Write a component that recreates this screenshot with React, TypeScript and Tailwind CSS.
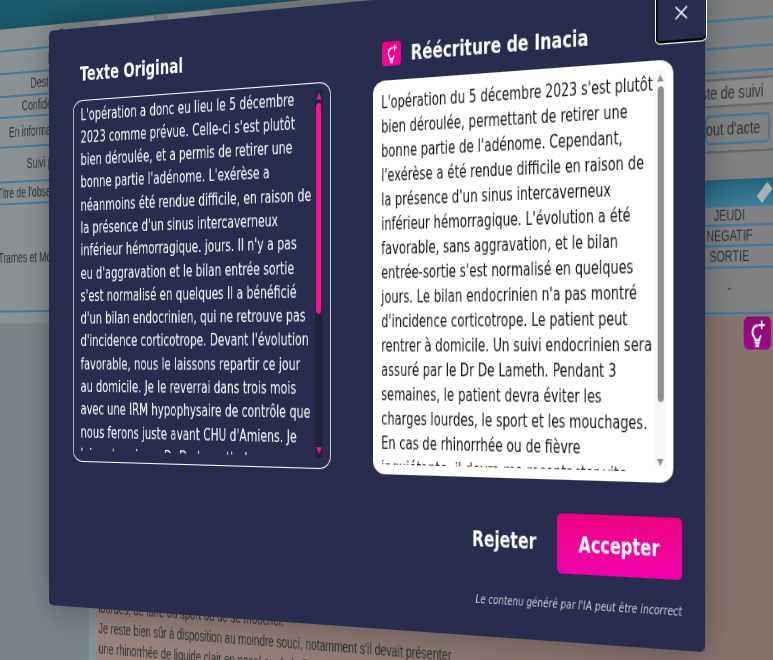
const originalLines = [
  "L'opération a donc eu lieu le 5 décembre",
  "2023 comme prévue. Celle-ci s'est plutôt",
  "bien déroulée, et a permis de retirer une",
  "bonne partie l'adénome. L'exérèse a",
  "néanmoins été rendue difficile, en raison de",
  "la présence d'un sinus intercaverneux",
  "inférieur hémorragique. jours. II n'y a pas",
  "eu d'aggravation et le bilan entrée sortie",
  "s'est normalisé en quelques Il a bénéficié",
  "d'un bilan endocrinien, qui ne retrouve pas",
  "d'incidence corticotrope. Devant l'évolution",
  "favorable, nous le laissons repartir ce jour",
  "au domicile. Je le reverrai dans trois mois",
  "avec une IRM hypophysaire de contrôle que",
  "nous ferons juste avant CHU d'Amiens. Je",
  "laisse le soin au Dr De Lameth de",
];

const rewrittenLines = [
  "L'opération du 5 décembre 2023 s'est plutôt",
  "bien déroulée, permettant de retirer une",
  "bonne partie de l'adénome. Cependant,",
  "l'exérèse a été rendue difficile en raison de",
  "la présence d'un sinus intercaverneux",
  "inférieur hémorragique. L'évolution a été",
  "favorable, sans aggravation, et le bilan",
  "entrée-sortie s'est normalisé en quelques",
  "jours. Le bilan endocrinien n'a pas montré",
  "d'incidence corticotrope. Le patient peut",
  "rentrer à domicile. Un suivi endocrinien sera",
  "assuré par le Dr De Lameth. Pendant 3",
  "semaines, le patient devra éviter les",
  "charges lourdes, le sport et les mouchages.",
  "En cas de rhinorrhée ou de fièvre",
  "inquiétante, il devra me recontacter vite.",
];

const formRows = [
  { label: "Date", height: "h-[23px]" },
  { label: "Réalisé", height: "h-[23px]" },
  { label: "Destinataire", height: "h-[23px]" },
  { label: "Confidentialité", height: "h-[21px]" },
  { label: "En information de", height: "h-[30px]" },
  { label: "Suivi post-op", height: "h-[35px]" },
  { label: "Titre de l'observation", height: "h-[22px]" },
  { label: "Trames et Modèles :", height: "h-[108px]" },
];

const dayRows = [
  { text: "JEUDI", height: "h-[16px]" },
  { text: "NEGATIF", height: "h-[17px]" },
  { text: "SORTIE", height: "h-[18px]" },
];

function BulbIcon() {
  return (
    <svg viewBox="0 0 24 24" className="h-[86%] w-[86%]" fill="none" stroke="white" strokeWidth="2" strokeLinecap="round">
      <path d="M12 5.5a5.5 5.5 0 0 0-4 9.2c.9 1 1.6 1.8 1.6 3.1h4.8c0-1.3.7-2.1 1.6-3.1" />
      <path d="M10 20.2h4M10.8 22.8h2.4" />
      <path d="M17 2v6M14 5h6" strokeWidth="1.7" />
    </svg>
  );
}

function Arrow({ up, color }: { up?: boolean; color: string }) {
  return (
    <svg viewBox="0 0 10 8" className="h-[6px] w-[8px]" fill={color}>
      <polygon points={up ? "5,0 10,8 0,8" : "0,0 10,0 5,8"} />
    </svg>
  );
}

function PageBehind() {
  return (
    <div className="flex h-full w-full flex-col bg-gradient-to-r from-[#8b9092] to-[#808080] font-['Liberation_Sans',sans-serif] text-[14px] text-[#2f3437] blur-[0.5px]">
      <div className="h-[94px] bg-gradient-to-b from-[#2f6f88] to-[#175468]" />

      <div className="flex h-[296px]">
        <div className="w-[350px]">
          {formRows.map((row, i) => (
            <div key={row.label} className={`flex items-center border-b-2 border-[#44799a] ${row.height}`}>
              <span className="w-[135px] text-right whitespace-nowrap">{row.label}</span>
              {i === 0 && (
                <div className="ml-[32px] flex gap-[18px] self-start">
                  <div className="h-[20px] w-[87px] border border-[#6f7a80] bg-[#9a9d9f]" />
                  <div className="h-[20px] w-[67px] border border-[#6f7a80] bg-[#9a9d9f]" />
                </div>
              )}
            </div>
          ))}
        </div>

        <div className="flex-1" />

        <div className="w-[130px]">
          <div className="h-[52px] border-b-2 border-[#44799a]" />
          <div className="h-[23px] border-b-2 border-[#44799a]" />
          <div className="h-[20px] border-b-2 border-[#44799a]" />
          <div className="mt-[4px] flex h-[24px] items-center border-y-2 border-[#656c70] bg-[#8a8a8a] whitespace-nowrap">
            <span className="-ml-[16px]">Liste de suivi</span>
          </div>
          <div className="mt-[6px] flex h-[25px] w-[72px] items-center justify-center rounded-[5px] border-2 border-[#44799a] whitespace-nowrap">
            <span className="-ml-[22px]">Ajout d'acte</span>
          </div>
          <div className="mt-[5px] h-[2px] bg-[#656c70]" />
          <div className="mt-[22px] flex h-[23px] items-center justify-end bg-gradient-to-b from-[#23637d] to-[#3e7f9a] pr-[56px]">
            <div className="h-[8px] w-[16px] -rotate-45 bg-[#b0b1b2]" />
          </div>
          {dayRows.map((row) => (
            <div key={row.text} className={`flex items-center border-b-2 border-[#44799a] text-[12px] ${row.height}`}>
              <span className="w-[54px] text-center">{row.text}</span>
            </div>
          ))}
          <div className="flex h-[31px] items-center text-[12px]">
            <span className="w-[54px] text-center">-</span>
          </div>
          <div className="mt-[5px] h-[2px] bg-[#44799a]" />
        </div>
      </div>

      <div className="flex flex-1">
        <div className="w-[153px] border-r-2 border-[#6889a0] bg-[#7a8488]" />
        <div className="w-[12px] bg-[#879093]" />
        <div className="relative flex-1 bg-gradient-to-r from-[#9b857f] to-[#85716c] pt-[269px] pl-[3px] leading-[20px] whitespace-nowrap">
          <div>lourdes, de faire du sport ou de se moucher.</div>
          <div>Je reste bien sûr à disposition au moindre souci, notamment s'il devait présenter</div>
          <div>une rhinorrhée de liquide clair en nasal ou de la fièvre</div>
          <div className="absolute top-[1px] left-[848px] flex h-[27px] w-[30px] items-center justify-center rounded-[5px] bg-gradient-to-b from-[#8f0a72] to-[#9c0a86]">
            <BulbIcon />
          </div>
        </div>
      </div>
    </div>
  );
}

function Modal() {
  return (
    <div className="absolute top-[100px] left-[90px] flex h-[570px] w-[880px] flex-col rounded-[5px] bg-[#282d4f] font-['DejaVu_Sans',sans-serif] text-white shadow-[0_0_40px_rgba(0,0,0,0.35)]">
      <div className="flex gap-[57px] pl-[38px]">
        <div className="w-[378px]">
          <h2 className="h-[71px] pt-[33px] pl-[11px] text-[20px] leading-[24px] font-bold whitespace-nowrap">Texte Original</h2>
          <div className="flex h-[356px] rounded-[16px/11px] border-[1.5px] border-white">
            <div className="h-[344px] flex-1 overflow-hidden pt-[2.5px] pl-[11px] text-[15.4px] leading-[22.3px] whitespace-nowrap">
              {originalLines.map((line) => (
                <div key={line}>{line}</div>
              ))}
            </div>
            <div className="mt-[5.5px] mr-[10.5px] flex h-[339px] w-[9.5px] flex-col items-center bg-[#21233d]">
              <div className="flex h-[12px] items-center">
                <Arrow up color="#ff0f95" />
              </div>
              <div className="h-[194px] w-[7px] rounded-full bg-[#ff0f95]" />
              <div className="flex-1" />
              <div className="pb-[4px]">
                <Arrow color="#ff0f95" />
              </div>
            </div>
          </div>
        </div>

        <div className="w-[370.5px]">
          <div className="flex h-[74px] items-start gap-[13px] pt-[39px] pl-[12px]">
            <div className="flex h-[22px] w-[25px] items-center justify-center rounded-[4px] bg-gradient-to-b from-[#f0007f] to-[#f000a8]">
              <BulbIcon />
            </div>
            <h2 className="text-[19.5px] leading-[24px] font-bold whitespace-nowrap">Réécriture de Inacia</h2>
          </div>
          <div className="flex h-[356px] rounded-[16px/12px] bg-white">
            <div className="h-[347px] flex-1 overflow-hidden pt-[9px] pl-[11px] text-[15.1px] leading-[22px] whitespace-nowrap text-[#141414]">
              {rewrittenLines.map((line) => (
                <div key={line}>{line}</div>
              ))}
            </div>
            <div className="mt-[9px] mr-[8px] flex h-[335px] w-[13px] shrink-0 flex-col items-center bg-[#f8f8f8]">
              <div className="flex h-[12.5px] items-center">
                <Arrow up color="#8f8f8f" />
              </div>
              <div className="h-[266px] w-[7px] rounded-full bg-[#8f8f8f]" />
              <div className="flex-1" />
              <div className="pb-[2px]">
                <Arrow color="#8f8f8f" />
              </div>
            </div>
          </div>
        </div>
      </div>

      <div className="mt-[29px] flex items-center justify-end gap-[25px] pr-[26px] font-bold">
        <button className="text-[19.5px]">Rejeter</button>
        <button className="h-[51.5px] w-[147px] rounded-[5px] bg-gradient-to-b from-[#ee0080] to-[#f000ac] text-[19px]">
          Accepter
        </button>
      </div>

      <p className="mt-[20px] pr-[26px] text-right text-[10.8px] leading-[14px] text-[#c9cad3] italic">
        Le contenu généré par l'IA peut être incorrect
      </p>

      <button className="absolute top-0 right-[-2px] flex h-[61px] w-[59px] items-center justify-center rounded-[6px/4px] border-[1.5px] border-white bg-[#282d4f] pt-[9px] shadow-[inset_2px_0_0_#000,inset_0_-2px_0_#000]">
        <svg viewBox="0 0 14 11" preserveAspectRatio="none" className="h-[11px] w-[14px]" stroke="white" strokeWidth="1.5" fill="none">
          <path d="M0.5 0.5L13.5 10.5M13.5 0.5L0.5 10.5" />
        </svg>
      </button>
    </div>
  );
}

export default function App() {
  return (
    <div className="relative h-[660px] w-[773px] overflow-hidden bg-[#8a8f91]">
      {/* the whole screen is photographed at an angle, so everything sits on one plane */}
      <div className="absolute top-[-100px] left-[-90px] h-[760px] w-[1100px] origin-[90px_100px] [transform:matrix3d(0.61659,-0.06574,0,-0.00018295,0,1.00702,0,0,0,0,1,0,49,31,0,1)]">
        <PageBehind />
        <Modal />
      </div>
    </div>
  );
}
